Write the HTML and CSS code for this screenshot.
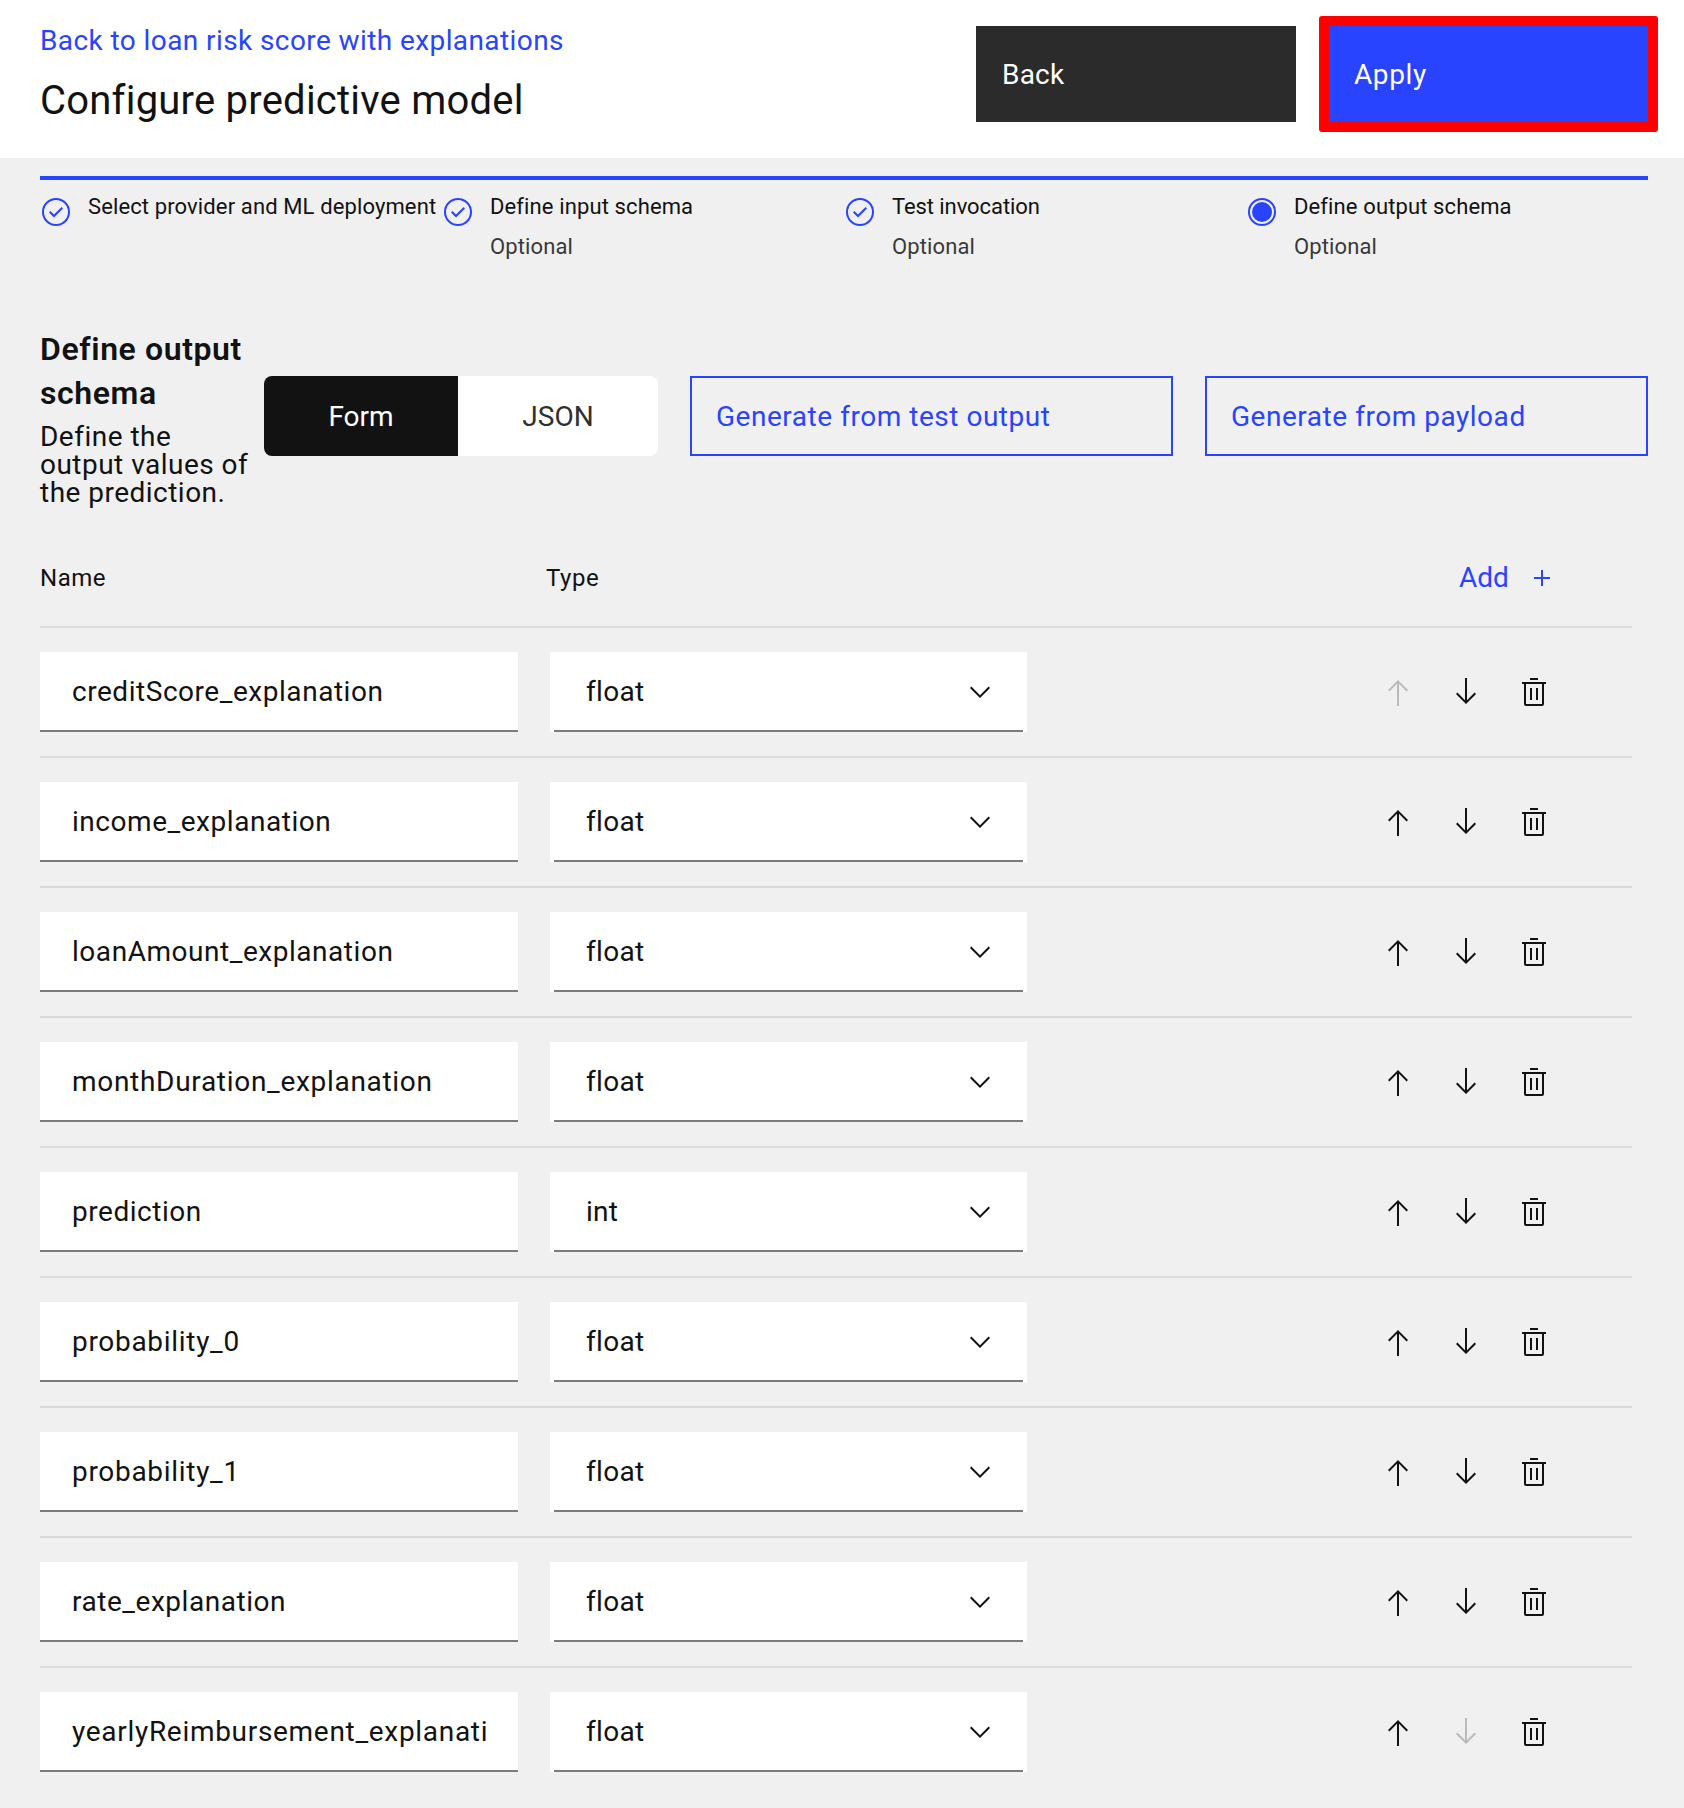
FILE: index.html
```html
<!DOCTYPE html>
<html lang="en">
<head>
<meta charset="utf-8">
<title>Configure predictive model</title>
<link rel="stylesheet" href="styles.css">
</head>
<body>
<svg class="sprite" aria-hidden="true">
  <symbol id="check" viewBox="0 0 32 32"><circle cx="16" cy="16" r="13" fill="none" stroke="currentColor" stroke-width="2"/><path d="M14 21.414 9 16.413 10.413 15 14 18.586 21.585 11 23 12.415z"/></symbol>
  <symbol id="current" viewBox="0 0 32 32"><circle cx="16" cy="16" r="13" fill="none" stroke="currentColor" stroke-width="2"/><circle cx="16" cy="16" r="10"/></symbol>
  <symbol id="plus" viewBox="0 0 32 32"><path d="M17 15V8h-2v7H8v2h7v7h2v-7h7v-2z"/></symbol>
  <symbol id="chevron" viewBox="0 0 32 32"><path d="M16 22 6 12l1.4-1.4 8.6 8.6 8.6-8.6L26 12z"/></symbol>
  <symbol id="up" viewBox="0 0 32 32"><path d="M16 4 6 14l1.41 1.41L15 7.83V30h2V7.83l7.59 7.58L26 14z"/></symbol>
  <symbol id="down" viewBox="0 0 32 32"><path d="M24.59 16.59 17 24.17V2h-2v22.17l-7.59-7.58L6 18l10 10 10-10z"/></symbol>
  <symbol id="trash" viewBox="0 0 32 32"><path d="M12 12h2v12h-2zM18 12h2v12h-2zM4 6v2h2v20a2 2 0 0 0 2 2h16a2 2 0 0 0 2-2V8h2V6zm4 22V8h16v20zM12 2h8v2h-8z"/></symbol>
</svg>

<header class="header">
  <div class="titles">
    <a class="back-link">Back to loan risk score with explanations</a>
    <h1 class="title">Configure predictive model</h1>
  </div>
  <div class="actions">
    <button class="btn btn-dark">Back</button>
    <button class="btn btn-primary">Apply</button>
  </div>
</header>

<main class="main">
  <ol class="steps">
    <li class="step"><svg class="icon"><use href="#check"/></svg><div><p class="step-name">Select provider and ML deployment</p></div></li>
    <li class="step"><svg class="icon"><use href="#check"/></svg><div><p class="step-name">Define input schema</p><p class="step-note">Optional</p></div></li>
    <li class="step"><svg class="icon"><use href="#check"/></svg><div><p class="step-name step-tight">Test invocation</p><p class="step-note">Optional</p></div></li>
    <li class="step"><svg class="icon"><use href="#current"/></svg><div><p class="step-name">Define output schema</p><p class="step-note">Optional</p></div></li>
  </ol>

  <section class="intro">
    <div class="intro-text">
      <h2 class="heading">Define output schema</h2>
      <p class="lead">Define the<br>output values of<br>the prediction.</p>
    </div>
    <div class="toggle"><span class="tab tab-on">Form</span><span class="tab">JSON</span></div>
    <button class="outline outline-test">Generate from test output</button>
    <button class="outline outline-payload">Generate from payload</button>
  </section>

  <section class="table">
    <div class="head"><span class="head-name">Name</span><span class="head-type">Type</span><a class="add">Add<svg class="icon"><use href="#plus"/></svg></a></div>
    <div class="row"><div class="field">creditScore_explanation</div><div class="select"><div class="select-in">float<svg class="icon"><use href="#chevron"/></svg></div></div><div class="tools"><svg class="icon off"><use href="#up"/></svg><svg class="icon"><use href="#down"/></svg><svg class="icon"><use href="#trash"/></svg></div></div>
    <div class="row"><div class="field">income_explanation</div><div class="select"><div class="select-in">float<svg class="icon"><use href="#chevron"/></svg></div></div><div class="tools"><svg class="icon"><use href="#up"/></svg><svg class="icon"><use href="#down"/></svg><svg class="icon"><use href="#trash"/></svg></div></div>
    <div class="row"><div class="field">loanAmount_explanation</div><div class="select"><div class="select-in">float<svg class="icon"><use href="#chevron"/></svg></div></div><div class="tools"><svg class="icon"><use href="#up"/></svg><svg class="icon"><use href="#down"/></svg><svg class="icon"><use href="#trash"/></svg></div></div>
    <div class="row"><div class="field field-wide">monthDuration_explanation</div><div class="select"><div class="select-in">float<svg class="icon"><use href="#chevron"/></svg></div></div><div class="tools"><svg class="icon"><use href="#up"/></svg><svg class="icon"><use href="#down"/></svg><svg class="icon"><use href="#trash"/></svg></div></div>
    <div class="row"><div class="field">prediction</div><div class="select"><div class="select-in">int<svg class="icon"><use href="#chevron"/></svg></div></div><div class="tools"><svg class="icon"><use href="#up"/></svg><svg class="icon"><use href="#down"/></svg><svg class="icon"><use href="#trash"/></svg></div></div>
    <div class="row"><div class="field field-wide">probability_0</div><div class="select"><div class="select-in">float<svg class="icon"><use href="#chevron"/></svg></div></div><div class="tools"><svg class="icon"><use href="#up"/></svg><svg class="icon"><use href="#down"/></svg><svg class="icon"><use href="#trash"/></svg></div></div>
    <div class="row"><div class="field field-wide">probability_1</div><div class="select"><div class="select-in">float<svg class="icon"><use href="#chevron"/></svg></div></div><div class="tools"><svg class="icon"><use href="#up"/></svg><svg class="icon"><use href="#down"/></svg><svg class="icon"><use href="#trash"/></svg></div></div>
    <div class="row"><div class="field">rate_explanation</div><div class="select"><div class="select-in">float<svg class="icon"><use href="#chevron"/></svg></div></div><div class="tools"><svg class="icon"><use href="#up"/></svg><svg class="icon"><use href="#down"/></svg><svg class="icon"><use href="#trash"/></svg></div></div>
    <div class="row"><div class="field field-wide">yearlyReimbursement_explanati</div><div class="select"><div class="select-in">float<svg class="icon"><use href="#chevron"/></svg></div></div><div class="tools"><svg class="icon"><use href="#up"/></svg><svg class="icon off"><use href="#down"/></svg><svg class="icon"><use href="#trash"/></svg></div></div>
  </section>
</main>
</body>
</html>
```
FILE: styles.css
```css
* { box-sizing: border-box; margin: 0; padding: 0; }

body {
  background: #f0f0f0;
  color: #121212;
  font: 28px/28px Roboto, "Liberation Sans", sans-serif;
  letter-spacing: 0.53px;
  min-height: 1808px;
}

.sprite { display: none; }
.icon { width: 32px; height: 32px; fill: currentColor; flex: none; }
.off { color: #bababa; }

button { font: inherit; letter-spacing: inherit; text-align: left; border: 0; }

.header {
  height: 158px;
  background: #fff;
  display: flex;
  justify-content: space-between;
  padding: 16px 26px 0 40px;
}
.back-link { display: block; line-height: 49px; color: #2844ff; letter-spacing: 0.41px; }
.title { font-size: 40px; font-weight: 400; line-height: 72px; letter-spacing: 0.22px; }

.actions { display: flex; gap: 23px; align-items: flex-start; }
.btn { height: 96px; width: 320px; padding: 2px 0 0 26px; color: #fff; letter-spacing: 0.2px; }
.btn-dark { background: #2b2b2b; margin-top: 10px; }
.btn-primary {
  background: #2844ff;
  width: 339px;
  height: 116px;
  border: 10px solid #fe0000;
  border-radius: 3px;
  padding-left: 25px;
  letter-spacing: 0.6px;
}

.main { padding: 18px 36px 0 40px; }

.steps {
  list-style: none;
  display: grid;
  grid-template-columns: repeat(4, 402px);
  border-top: 4px solid #2844ff;
  height: 151px;
  padding-top: 7px;
}
.step { display: flex; gap: 16px; white-space: nowrap; font-size: 22px; line-height: 40px; letter-spacing: 0.12px; }
.step .icon { color: #2844ff; margin-top: 9px; }
.step-tight { letter-spacing: -0.08px; }
.step-note { color: #393939; }

.intro { display: flex; align-items: flex-start; height: 201px; }
.intro-text { width: 224px; }
.heading { font-size: 32px; line-height: 44px; font-weight: 600; letter-spacing: 0.6px; margin-bottom: 8px; }
.lead { white-space: nowrap; letter-spacing: 0.48px; }

.toggle { display: flex; width: 394px; height: 80px; margin: 49px 32px 0 0; border-radius: 8px; overflow: hidden; background: #fff; color: #2f2f2f; }
.tab { width: 200px; padding-top: 2px; display: flex; align-items: center; justify-content: center; letter-spacing: 0; }
.tab-on { width: 194px; background: #121212; color: #fff; }

.outline { height: 80px; margin-top: 49px; border: 2px solid #2844ff; background: none; color: #2844ff; padding: 2px 0 0 24px; }
.outline-test { width: 483px; margin-right: 32px; }
.outline-payload { width: 443px; }

.table { width: 1592px; }
.head { display: flex; align-items: center; height: 100px; padding-top: 2px; border-bottom: 2px solid #d9d9d9; font-size: 24px; }
.head-name { width: 506px; }
.head-type { width: 913px; }
.add { display: flex; align-items: center; gap: 17px; color: #2844ff; font-size: 28px; letter-spacing: 0; }

.row { display: flex; align-items: center; height: 130px; border-bottom: 2px solid #d9d9d9; }
.row:last-child { border-bottom-color: transparent; }
.field {
  width: 478px;
  height: 80px;
  line-height: 78px;
  padding: 1px 0 0 32px;
  margin-right: 32px;
  background: #fff;
  border-bottom: 2px solid #7b7b7b;
  letter-spacing: 0.54px;
}
.field-wide { letter-spacing: 0.7px; }
.select { width: 477px; height: 80px; padding: 0 4px; background: #fff; margin-right: 355px; }
.select-in {
  display: flex;
  align-items: center;
  justify-content: space-between;
  height: 80px;
  padding: 2px 27px 0 32px;
  border-bottom: 2px solid #7b7b7b;
  letter-spacing: 0.3px;
}
.tools { display: flex; gap: 36px; }
```
